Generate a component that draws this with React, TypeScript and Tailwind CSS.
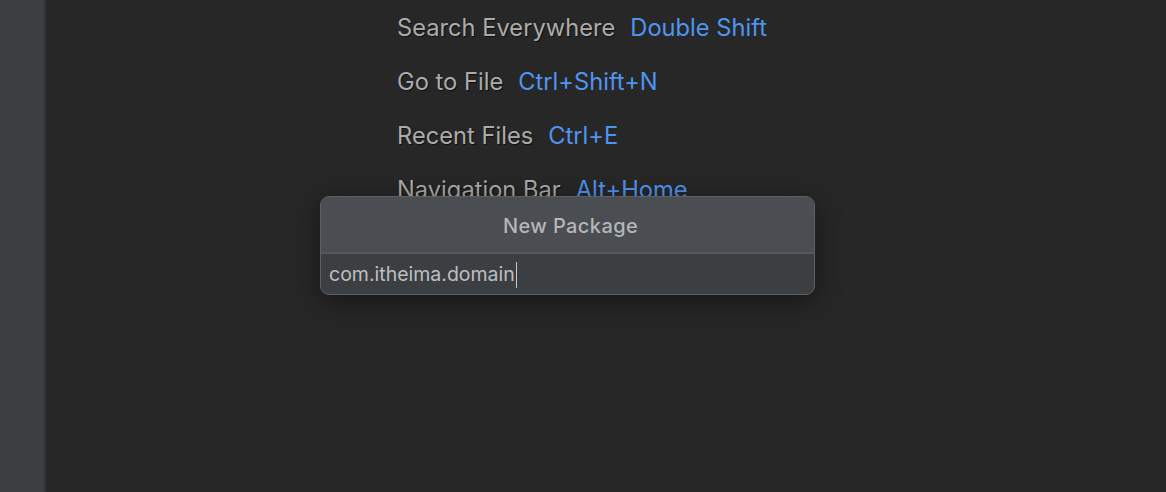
import React from "react";

const shortcuts = [
  { label: "Search Everywhere", keys: "Double Shift" },
  { label: "Go to File", keys: "Ctrl+Shift+N" },
  { label: "Recent Files", keys: "Ctrl+E" },
  { label: "Navigation Bar", keys: "Alt+Home" },
];

function NewPackagePopup() {
  return (
    <div className="absolute left-[274px] top-[196px] w-[495px] overflow-hidden rounded-[9px] border border-[#5c5f63] bg-[#3c3f42] shadow-[0_6px_28px_rgba(0,0,0,0.45)]">
      <div className="flex h-[57px] items-center justify-center border-b-2 border-[#55585b] bg-[#4a4d51] pl-[6px] pt-[3px]">
        <span className="text-[20px] font-medium tracking-[0.4px] text-[#b4b6b9]">New Package</span>
      </div>
      <div className="flex h-[40px] items-center px-[8px] pt-[2px]">
        <span className="text-[19.5px] text-[#bdbfc2]">com.itheima.domain</span>
        <span className="ml-[1px] h-[26px] w-[1px] bg-[#c8c8c8]" />
      </div>
    </div>
  );
}

export default function App() {
  return (
    <div className="flex h-[492px] w-[1166px] overflow-hidden bg-[#272727] font-['Inter',sans-serif]">
      <div className="h-full w-[46px] shrink-0 border-r-2 border-[#303234] bg-[#3b3f42]" />
      <div className="relative flex-1">
        <div className="flex flex-col gap-[21px] pl-[351px] pt-[11px]">
          {shortcuts.map((s) => (
            <div key={s.label} className="flex h-[33px] items-center gap-[15px] text-[23.7px] leading-none">
              <span className="text-[#ababab] [text-shadow:1px_1px_1px_rgba(0,0,0,0.6)]">{s.label}</span>
              <span className="text-[#4f95ef]">{s.keys}</span>
            </div>
          ))}
        </div>
        <NewPackagePopup />
      </div>
    </div>
  );
}
